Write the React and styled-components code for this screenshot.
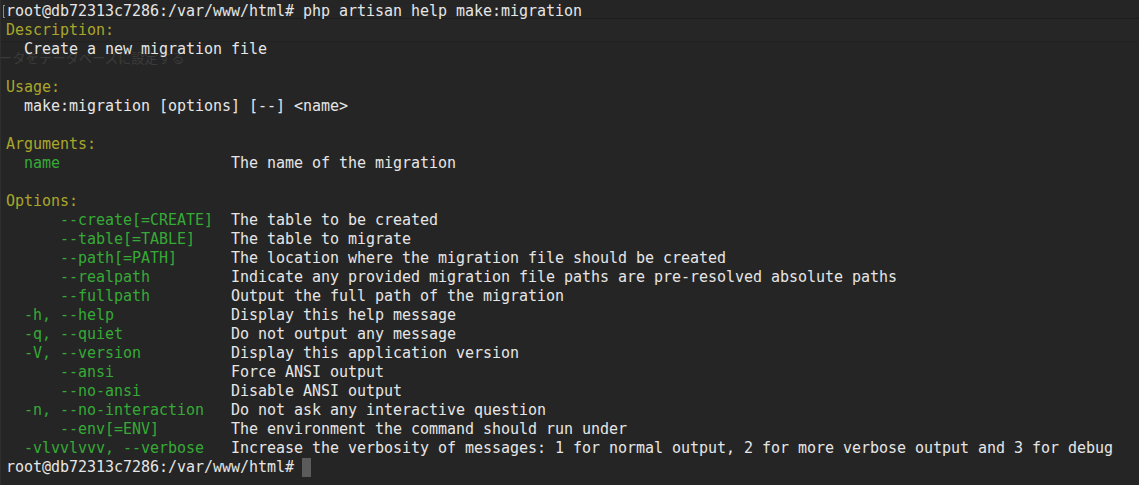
import React from "react";
import styled, { createGlobalStyle } from "styled-components";

const Global = createGlobalStyle`
  html, body { margin: 0; padding: 0; background: #252525; }
  body { width: 1139px; height: 485px; overflow: hidden; }
`;

const Terminal = styled.div`
  position: relative;
  box-sizing: border-box;
  width: 1139px;
  height: 485px;
  padding: 2px 0 0 5px;
  background: #252525;
  border-left: 1px solid #2f2f2f;
  font-family: "DejaVu Sans Mono", "Liberation Mono", monospace;
  font-size: 15px;
  letter-spacing: -0.03px;
  line-height: 19px;
  color: #e6e6e6;
  overflow: hidden;
`;

const Band = styled.div`
  position: absolute;
  left: 0;
  right: 0;
  top: 18px;
  height: 22px;
  border-top: 1px solid #1d1d1d;
  border-bottom: 1px solid #202020;
  background: #262626;
  pointer-events: none;
`;

const Ghost = styled.div`
  position: absolute;
  left: -2px;
  top: 50px;
  font-family: "Noto Sans CJK JP", sans-serif;
  font-size: 13.3px;
  letter-spacing: 0;
  line-height: 16px;
  color: #3b3b3b;
  white-space: nowrap;
  pointer-events: none;
`;

const Bracket = styled.span`
  position: absolute;
  left: 2px;
  top: 5px;
  width: 2px;
  height: 13px;
  border: 1px solid #8a8a8a;
  border-right: none;
  box-sizing: border-box;
`;

const Lines = styled.div`
  position: relative;
  display: flex;
  flex-direction: column;
`;

const Line = styled.div`
  height: 19px;
  white-space: pre;
  display: flex;
  align-items: center;
`;

const Heading = styled.span`
  color: #a9a72a;
`;

const Key = styled.span`
  color: #36aa36;
  width: 225px;
  flex: none;
  white-space: pre;
`;

const Cursor = styled.span`
  display: inline-block;
  width: 9px;
  height: 19px;
  margin-left: -1px;
  background: #5b5b5b;
`;

const options = [
  ["    --create[=CREATE]", "The table to be created"],
  ["    --table[=TABLE]", "The table to migrate"],
  ["    --path[=PATH]", "The location where the migration file should be created"],
  ["    --realpath", "Indicate any provided migration file paths are pre-resolved absolute paths"],
  ["    --fullpath", "Output the full path of the migration"],
  ["-h, --help", "Display this help message"],
  ["-q, --quiet", "Do not output any message"],
  ["-V, --version", "Display this application version"],
  ["    --ansi", "Force ANSI output"],
  ["    --no-ansi", "Disable ANSI output"],
  ["-n, --no-interaction", "Do not ask any interactive question"],
  ["    --env[=ENV]", "The environment the command should run under"],
  ["-vlvvlvvv, --verbose", "Increase the verbosity of messages: 1 for normal output, 2 for more verbose output and 3 for debug"],
];

export default function App() {
  return (
    <>
      <Global />
      <Terminal>
        <Band />
        <Ghost>ータをデータベースに設定する</Ghost>
        <Bracket />
        <Lines>
          <Line>root@db72313c7286:/var/www/html# php artisan help make:migration</Line>
          <Line><Heading>Description:</Heading></Line>
          <Line>{"  Create a new migration file"}</Line>
          <Line />
          <Line><Heading>Usage:</Heading></Line>
          <Line>{"  make:migration [options] [--] <name>"}</Line>
          <Line />
          <Line><Heading>Arguments:</Heading></Line>
          <Line><Key>{"  name"}</Key>The name of the migration</Line>
          <Line />
          <Line><Heading>Options:</Heading></Line>
          {options.map(([k, d]) => (
            <Line key={k}><Key>{"  " + k}</Key>{d}</Line>
          ))}
          <Line>{"root@db72313c7286:/var/www/html# "}<Cursor /></Line>
        </Lines>
      </Terminal>
    </>
  );
}
